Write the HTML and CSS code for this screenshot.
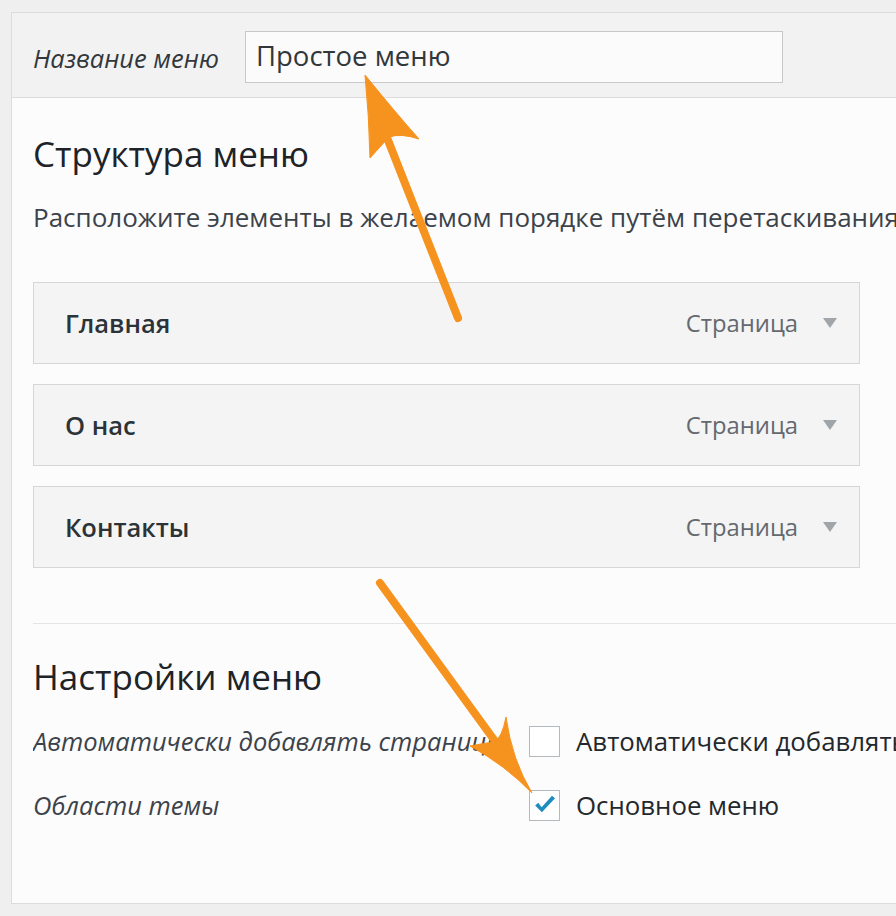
FILE: index.html
```html
<!DOCTYPE html>
<html lang="ru">
<head>
<meta charset="utf-8">
<title>Структура меню</title>
<link rel="stylesheet" href="styles.css">
</head>
<body>
<div class="page">
  <div class="panel">
    <div class="panel-header">
      <label class="name-label">Название меню</label>
      <div class="name-input">Простое меню</div>
    </div>
    <div class="panel-body">
      <h2 class="section-title">Структура меню</h2>
      <p class="section-desc">Расположите элементы в желаемом порядке путём перетаскивания. Щёлкните на стрелке справа от элемента, чтобы открыть дополнительные настройки.</p>
      <ul class="menu-items">
        <li class="menu-item"><span class="item-title">Главная</span><span class="item-type">Страница</span><span class="item-toggle"></span></li>
        <li class="menu-item"><span class="item-title">О нас</span><span class="item-type">Страница</span><span class="item-toggle"></span></li>
        <li class="menu-item"><span class="item-title">Контакты</span><span class="item-type">Страница</span><span class="item-toggle"></span></li>
      </ul>
      <div class="menu-settings">
        <h3 class="section-title">Настройки меню</h3>
        <div class="setting-row">
          <div class="setting-label">Автоматически добавлять страницы</div>
          <div class="setting-control"><span class="checkbox"></span><span class="setting-text">Автоматически добавлять новые страницы верхнего уровня</span></div>
        </div>
        <div class="setting-row">
          <div class="setting-label">Области темы</div>
          <div class="setting-control"><span class="checkbox checked"><svg viewBox="0 0 20 20" class="check"><path d="M1.8 10.4 L7.4 16 L18.4 4.4 L15.8 2.2 L7.2 11.8 L4.4 8.2 Z" fill="#1e8cbe"/></svg></span><span class="setting-text">Основное меню</span></div>
        </div>
      </div>
    </div>
  </div>
  <svg class="arrows" width="896" height="916" viewBox="0 0 896 916">
    <g fill="#f6921e" stroke="#f6921e">
      <line x1="458" y1="318" x2="384" y2="130" stroke-width="8" stroke-linecap="round"/>
      <path d="M365,75 Q395,112 419,139 Q401,133 389,137 L370,158 Q369,115 365,75 Z" stroke-width="1" stroke-linejoin="round"/>
      <line x1="380" y1="583" x2="500" y2="748" stroke-width="8" stroke-linecap="round"/>
      <path d="M532,793 Q512,760 506,717 Q502,738 494,742 Q485,743 470,746 Q505,765 532,793 Z" stroke-width="1" stroke-linejoin="round"/>
    </g>
  </svg>
</div>
</body>
</html>
```

FILE: styles.css
```css
html, body {
  margin: 0;
  padding: 0;
}
body {
  background: #efefef;
  font-family: "Open Sans", "Noto Sans", sans-serif;
  color: #23282d;
  overflow: hidden;
}
.page {
  position: relative;
  width: 896px;
  height: 916px;
  padding: 12px 0 0 11px;
  box-sizing: border-box;
  overflow: hidden;
}
.panel {
  width: 1000px;
  border: 1px solid #dcdcdc;
  background: #fcfcfc;
}
.panel-header {
  display: flex;
  align-items: flex-start;
  height: 85px;
  padding: 18px 0 0 21px;
  box-sizing: border-box;
  background: #f2f2f2;
  border-bottom: 1px solid #dcdcdc;
}
.name-label {
  flex: none;
  width: 212px;
  height: 52px;
  line-height: 54px;
  font-size: 25.5px;
  font-style: italic;
  color: #32373c;
}
.name-input {
  flex: none;
  width: 538px;
  height: 52px;
  box-sizing: border-box;
  border: 1px solid #c8c8c8;
  background: #fbfbfb;
  padding-left: 10px;
  font-size: 27.5px;
  line-height: 48px;
  color: #32373c;
}
.panel-body {
  padding: 0 0 66px 21px;
}
.section-title {
  margin: 36px 0 0;
  font-size: 35px;
  line-height: 40px;
  font-weight: 400;
  color: #1d2327;
}
.section-desc {
  margin: 28px 0 0;
  font-size: 26px;
  line-height: 30px;
  white-space: nowrap;
  color: #3c434a;
}
.menu-items {
  list-style: none;
  margin: 50px 0 0;
  padding: 0;
  display: flex;
  flex-direction: column;
  gap: 20px;
  width: 827px;
}
.menu-item {
  display: flex;
  align-items: center;
  height: 82px;
  box-sizing: border-box;
  border: 1px solid #d6d6d6;
  background: #f4f4f4;
  padding: 0 22px 0 31px;
}
.item-title {
  flex: 1;
  font-size: 25.5px;
  font-weight: 600;
  color: #2c3338;
}
.item-type {
  font-size: 23.8px;
  color: #646970;
}
.item-toggle {
  width: 0;
  height: 0;
  margin-left: 25px;
  border-left: 7px solid transparent;
  border-right: 7px solid transparent;
  border-top: 10px solid #a0a5aa;
}
.menu-settings {
  margin-top: 55px;
  border-top: 1px solid #e4e4e4;
}
.menu-settings .section-title {
  margin-top: 33px;
}
.menu-settings .section-title + .setting-row {
  margin-top: 12px;
}
.setting-row {
  display: flex;
  align-items: center;
  height: 64px;
}
.setting-label {
  flex: none;
  width: 480px;
  margin-right: 16px;
  overflow: hidden;
  white-space: nowrap;
  font-size: 25.5px;
  font-style: italic;
  color: #3c434a;
}
.setting-control {
  display: flex;
  align-items: center;
  white-space: nowrap;
}
.checkbox {
  flex: none;
  display: flex;
  align-items: center;
  justify-content: center;
  width: 31px;
  height: 31px;
  box-sizing: border-box;
  border: 1px solid #b4b9be;
  background: #fff;
  margin-right: 16px;
}
.check {
  width: 24px;
  height: 24px;
}
.setting-text {
  font-size: 25.8px;
  color: #23282d;
}
.arrows {
  position: absolute;
  left: 0;
  top: 0;
  pointer-events: none;
}
```
